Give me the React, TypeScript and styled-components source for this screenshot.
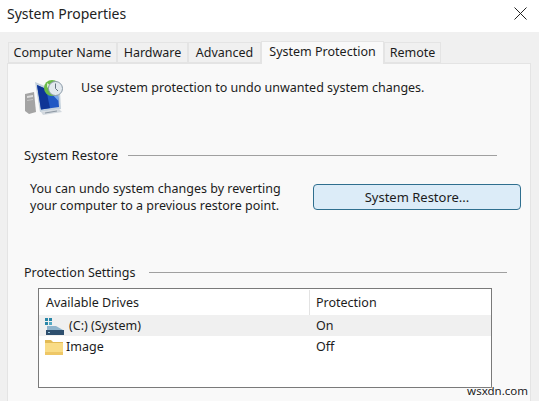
import React from "react";
import styled, { createGlobalStyle } from "styled-components";

const Global = createGlobalStyle`
  html, body { margin: 0; padding: 0; background: #f0f0f0; }
  * { box-sizing: border-box; }
`;

const Window = styled.div`
  position: relative;
  width: 539px;
  height: 401px;
  overflow: hidden;
  display: flex;
  flex-direction: column;
  background: #f0f0f0;
  color: #1c1c1c;
  font-family: "Noto Sans", "Open Sans", sans-serif;
  font-size: 12.5px;
`;

const TitleBar = styled.div`
  height: 32px;
  flex: none;
  background: #fff;
  display: flex;
  align-items: center;
  justify-content: space-between;
  padding: 0 12px 5px 7px;
  font-size: 14px;
  color: #222;
`;

const Body = styled.div`
  flex: 1;
  min-height: 0;
  display: flex;
  flex-direction: column;
  padding: 8px 8px 0 7px;
`;

const TabStrip = styled.div`
  height: 23px;
  flex: none;
  display: flex;
  align-items: flex-end;
  padding-left: 1px;
  position: relative;
  z-index: 1;
`;

const Tab = styled.div<{ $active?: boolean; $w: number }>`
  width: ${(p) => p.$w}px;
  height: ${(p) => (p.$active ? 23 : 21)}px;
  margin-bottom: ${(p) => (p.$active ? -1 : 0)}px;
  background: ${(p) => (p.$active ? "#f9f9f9" : "#f0f0f0")};
  border: 1px solid #e4e4e4;
  border-bottom: ${(p) => (p.$active ? "none" : "1px solid #e4e4e4")};
  display: flex;
  align-items: center;
  justify-content: center;
  white-space: nowrap;
  padding-bottom: ${(p) => (p.$active ? 3 : 0)}px;
`;

const Panel = styled.div`
  flex: 1;
  min-height: 0;
  background: #f9f9f9;
  border: 1px solid #e4e4e4;
  border-bottom: none;
  padding: 15px 0 0 16px;
  display: flex;
  flex-direction: column;
`;

const Intro = styled.div`
  display: flex;
  align-items: flex-start;
  gap: 18px;
  height: 44px;
  flex: none;
  margin-left: 1px;
  line-height: 18px;
`;

const SectionHead = styled.div<{ $w: number; $top: number; $gap: number; $size: number }>`
  width: ${(p) => p.$w}px;
  margin-top: ${(p) => p.$top}px;
  height: 18px;
  flex: none;
  display: flex;
  align-items: center;
  gap: ${(p) => p.$gap}px;
  font-size: ${(p) => p.$size}px;
  white-space: nowrap;
  &::after {
    content: "";
    flex: 1;
    height: 1px;
    background: #a0a0a0;
  }
`;

const RestoreRow = styled.div`
  display: flex;
  align-items: center;
  justify-content: space-between;
  width: 497px;
  padding-left: 6px;
  margin-top: 16px;
  flex: none;
`;

const RestoreText = styled.div`
  line-height: 17px;
  width: 280px;
`;

const RestoreButton = styled.button`
  width: 208px;
  height: 26px;
  border: 1px solid #2f6f8f;
  border-radius: 4px;
  background: #dcecf8;
  color: #1c1c1c;
  font: inherit;
  font-size: 13px;
  padding: 0;
`;

const ListBox = styled.div`
  width: 454px;
  height: 100px;
  flex: none;
  margin: 7px 0 0 14px;
  background: #fff;
  border: 1px solid #7a7a7a;
  display: flex;
  flex-direction: column;
`;

const HeaderRow = styled.div`
  height: 26px;
  flex: none;
  display: grid;
  grid-template-columns: 270px 1fr;
  padding: 1px 2px 0 0;
`;

const HeaderCell = styled.div<{ $divider?: boolean }>`
  display: flex;
  align-items: center;
  padding-left: ${(p) => (p.$divider ? 6 : 7)}px;
  border-left: ${(p) => (p.$divider ? "1px solid #e3e3e3" : "none")};
`;

const Row = styled.div<{ $selected?: boolean }>`
  height: 21px;
  flex: none;
  display: grid;
  grid-template-columns: 270px 1fr;
  align-items: center;
  background: ${(p) => (p.$selected ? "#f0f0f0" : "#fff")};
`;

const DriveCell = styled.div<{ $gap: number }>`
  display: flex;
  align-items: center;
  gap: ${(p) => p.$gap}px;
  padding-left: 6px;
`;

const StatusCell = styled.div`
  padding-left: 7px;
`;

const Watermark = styled.div`
  position: absolute;
  right: 11px;
  bottom: 3px;
  font-size: 11.5px;
  line-height: 14px;
  color: #222;
  text-shadow: 0 0 2px #fff, 0 0 2px #fff;
`;

const CloseIcon = () => (
  <svg width="13" height="13" viewBox="0 0 13 13" fill="none" stroke="#222" strokeWidth="1">
    <path d="M.5.5l12 12M12.5.5l-12 12" />
  </svg>
);

const RestoreIcon = () => (
  <svg width="38" height="37" viewBox="0 0 38 37" style={{ flex: "none" }}>
    <path d="M0 15l9-2 2 20-7 2-4-3z" fill="#a4a4a4" />
    <path d="M2 17l6-1v2l-6 1z" fill="#dcdcdc" />
    <path d="M2 21l6-1v1l-6 1z" fill="#c4c4c4" />
    <path d="M10 3l25 10 1 17-21 3z" fill="#c3d0dc" />
    <path d="M12 6l21 9 1 13-18 2.500z" fill="#2058c4" />
    <path d="M12 6l9 4 4 19-9 1.500z" fill="#0f3596" />
    <path d="M24 12l9 3 .5 7z" fill="#7aa8ea" />
    <path d="M16 33l18-3 3 3-19 3z" fill="#d2d8de" />
    <path d="M20 33.500l12-2v1l-12 2z" fill="#8c97a2" />
    <circle cx="27" cy="9" r="8" fill="#6cbb48" />
    <path d="M22 4l3 2-3 3z" fill="#fff" opacity=".7" />
    <circle cx="30.500" cy="9.500" r="7" fill="#e3e9ee" stroke="#8b9aa8" strokeWidth="1" />
    <path d="M30.500 4.500v5l2.500 2.500" fill="none" stroke="#64727f" strokeWidth="1" />
  </svg>
);

const DriveIcon = () => (
  <svg width="19" height="18" viewBox="0 0 19 18" style={{ flex: "none" }}>
    <path d="M0 1h3v3H0zM4 1h3v3H4zM0 5h3v3H0z" fill="#2a87a8" />
    <path d="M4 5h3v3H4z" fill="#54aac4" />
    <path d="M2 9h9l7 4H2z" fill="#8fb4cc" />
    <path d="M1 13h18v5H1z" fill="#2e4f6e" />
    <path d="M3 15h2v1H3z" fill="#9fd0e6" />
  </svg>
);

const FolderIcon = () => (
  <svg width="18" height="16" viewBox="0 0 18 16" style={{ flex: "none" }}>
    <path d="M0 1h6l2 2h10v12H0z" fill="#e3bb55" />
    <path d="M0 4h18v12H0z" fill="#f9dc86" />
    <path d="M0 13h18v3H0z" fill="#eec766" />
  </svg>
);

export default function App() {
  return (
    <Window>
      <Global />
      <TitleBar>
        <span>System Properties</span>
        <CloseIcon />
      </TitleBar>
      <Body>
        <TabStrip>
          <Tab $w={109}>Computer Name</Tab>
          <Tab $w={71}>Hardware</Tab>
          <Tab $w={73}>Advanced</Tab>
          <Tab $w={123} $active>System Protection</Tab>
          <Tab $w={57}>Remote</Tab>
        </TabStrip>
        <Panel>
          <Intro>
            <RestoreIcon />
            <span>Use system protection to undo unwanted system changes.</span>
          </Intro>
          <SectionHead $w={473} $top={23} $gap={10} $size={13}>System Restore</SectionHead>
          <RestoreRow>
            <RestoreText>
              You can undo system changes by reverting
              <br />
              your computer to a previous restore point.
            </RestoreText>
            <RestoreButton>System Restore...</RestoreButton>
          </RestoreRow>
          <SectionHead $w={483} $top={49} $gap={14} $size={12.5}>Protection Settings</SectionHead>
          <ListBox>
            <HeaderRow>
              <HeaderCell>Available Drives</HeaderCell>
              <HeaderCell $divider>Protection</HeaderCell>
            </HeaderRow>
            <Row $selected>
              <DriveCell $gap={5}><DriveIcon />(C:) (System)</DriveCell>
              <StatusCell>On</StatusCell>
            </Row>
            <Row>
              <DriveCell $gap={3}><FolderIcon />Image</DriveCell>
              <StatusCell>Off</StatusCell>
            </Row>
          </ListBox>
        </Panel>
      </Body>
      <Watermark>wsxdn.com</Watermark>
    </Window>
  );
}
